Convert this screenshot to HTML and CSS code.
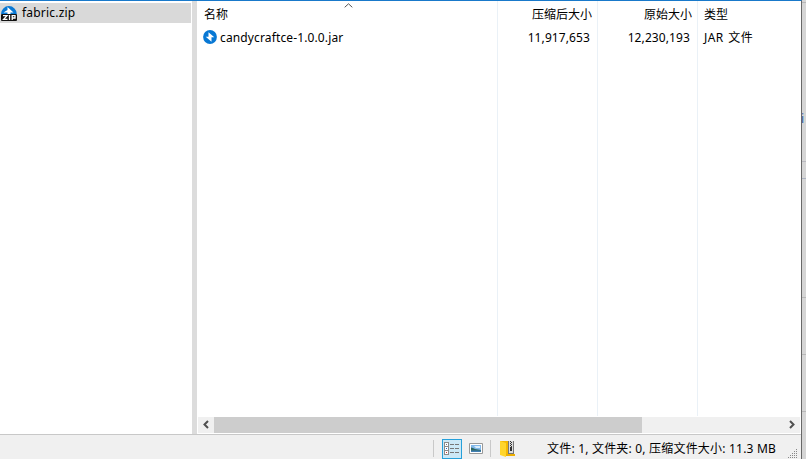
FILE: index.html
```
<!DOCTYPE html>
<html lang="zh-CN">
<head>
<meta charset="utf-8">
<title>fabric.zip</title>
<link rel="stylesheet" href="styles.css">
</head>
<body>
<div class="desktop">
  <div class="window">
    <div class="main">
      <aside class="tree">
        <div class="tree-item">
          <svg class="zip-icon" width="17" height="18" viewBox="0 0 17 18">
            <path d="M1 10a7.900 7.900 0 0 1 15.800 0z" fill="#0878d4"/>
            <path d="M7.500 3L13.500 8.500H10.500V10H7.500V8.500H3.500L7.500 6z" fill="#fff"/>
            <rect x="1" y="10" width="16" height="7" rx="1" fill="#111"/>
            <path d="M3 11.700h4L3.600 15.300H7.500M9.500 11v5M12.200 16v-4.300h2.800v2.300h-2.800" fill="none" stroke="#fff" stroke-width="1.300"/>
          </svg>
          <span class="tree-name">fabric.zip</span>
        </div>
      </aside>
      <div class="splitter"></div>
      <section class="list">
        <div class="columns">
          <div class="col name">
            <svg class="sort" width="9" height="5" viewBox="0 0 9 5"><path d="M.7 4.3L4.5.8l3.8 3.5" fill="none" stroke="#555"/></svg>
            <div class="head">名称</div>
            <div class="cell file">
              <svg class="file-icon" width="14" height="14" viewBox="0 0 14 14">
                <circle cx="7" cy="7" r="6.9" fill="#0878d4"/>
                <path d="M5.500 2.300L11.300 7.300H8.500V11.700L2.700 6.700H5.500z" fill="#fff"/>
              </svg>
              <span class="file-name">candycraftce-1.0.0.jar</span>
            </div>
          </div>
          <div class="col num"><div class="head">压缩后大小</div><div class="cell"><span class="number">11,917,653</span></div></div>
          <div class="col num"><div class="head">原始大小</div><div class="cell"><span class="number">12,230,193</span></div></div>
          <div class="col type"><div class="head">类型</div><div class="cell kind">JAR 文件</div></div>
        </div>
        <div class="scrollbar">
          <svg width="16" height="16" viewBox="0 0 16 16"><path d="M10 4L6.500 7.500 10 11" fill="none" stroke="#505050" stroke-width="2"/></svg>
          <div class="track"><div class="thumb"></div></div>
          <svg width="16" height="16" viewBox="0 0 16 16"><path d="M6 4l3.500 3.500L6 11" fill="none" stroke="#505050" stroke-width="2"/></svg>
        </div>
      </section>
    </div>
    <footer class="status">
      <div class="sep"></div>
      <div class="view active">
        <svg width="18" height="18" viewBox="0 0 18 18" shape-rendering="crispEdges">
          <g fill="#fff" stroke="#8a8a8a"><path d="M1.500 2.500h4v4h-4zM1.500 6.500h4v4h-4zM1.500 10.500h4v4h-4z"/></g>
          <path d="M3 4h1v1H3z" fill="#678"/><path d="M3 8h1v1H3z" fill="#26c"/><path d="M3 12h1v1H3z" fill="#c33"/>
          <path d="M7 4h4v1H7zM12 4h4v1h-4zM7 8h4v1H7zM12 8h4v1h-4zM7 12h4v1H7zM12 12h4v1h-4z" fill="#777"/>
        </svg>
      </div>
      <svg class="thumbs" width="14" height="11" viewBox="0 0 14 11">
        <path d="M.5.5h13v10H.5z" fill="#fff" stroke="#999"/>
        <path d="M2 2h10v7H2z" fill="#82b8ea"/><path d="M2 4.500q2 0 4 1.500l6 1v1H2z" fill="#2c6660"/><path d="M2 7.500h10V9H2z" fill="#4380b4"/><path d="M5 3h6v2H7z" fill="#d8edfb"/>
      </svg>
      <div class="sep"></div>
      <svg class="folder" width="17" height="17" viewBox="0 0 17 17">
        <path d="M1 1h14v14H1z" fill="#f5b800"/>
        <path d="M9 1h6v13H9z" fill="#777"/><path d="M10 1h4v12h-4z" fill="#ddd"/>
        <path d="M11 1h1v1h-1zM12 2h1v1h-1zM11 3h1v1h-1zM12 4h1v1h-1zM11 5h1v1h-1zM12 6h1v1h-1zM11 7h2v4h-2z" fill="#333"/>
        <path d="M1 1l6 2v14l-6-2z" fill="#ffd52b"/><path d="M7 14h9v2H7z" fill="#edae00"/>
      </svg>
      <span class="summary">文件: 1, 文件夹: 0, 压缩文件大小: 11.3 MB</span>
      <svg class="grip" width="10" height="10" viewBox="0 0 10 10" shape-rendering="crispEdges"><path d="M8 0h1v1H8zM6 2h1v1H6zM8 2h1v1H8zM4 4h1v1H4zM6 4h1v1H6zM8 4h1v1H8zM2 6h1v1H2zM4 6h1v1H4zM6 6h1v1H6zM8 6h1v1H8zM0 8h1v1H0zM2 8h1v1H2zM4 8h1v1H4zM6 8h1v1H6zM8 8h1v1H8z" fill="#888"/></svg>
    </footer>
  </div>
  <div class="behind">
    <div class="block b1"></div>
    <div class="block b2"><span>i</span></div>
    <div class="block b3"></div>
    <div class="block b4"></div>
    <div class="block b5"></div>
    <div class="block b6"></div>
  </div>
</div>
</body>
</html>
```
FILE: styles.css
```
* { box-sizing: border-box; }
body { margin: 0; overflow: hidden; font: 12px/16px "Noto Sans", "Noto Sans CJK SC", sans-serif; color: #000; }
svg { display: block; flex: none; }
.desktop { display: flex; width: 806px; height: 459px; }
.window { width: 802px; display: flex; flex-direction: column; border-top: 1px solid #1979ca; border-right: 1px solid #686868; background: #fff; }
.main { height: 433px; display: flex; }
.tree { width: 192px; padding-top: 2px; }
.tree-item { width: 191px; height: 20px; display: flex; align-items: center; background: #d9d9d9; }
.tree-name { margin-left: 5px; letter-spacing: .2px; white-space: nowrap; }
.splitter { width: 5px; background: #dcdcdc; }
.list { width: 604px; display: flex; flex-direction: column; padding-left: 1px; }
.columns { height: 416px; display: flex; }
.col { position: relative; width: 100px; height: 415px; padding-top: 6px; border-right: 1px solid #eaf1f7; white-space: nowrap; }
.name { width: 300px; padding-left: 6px; }
.num { text-align: right; padding-right: 5px; }
.num .cell { padding-right: 2px; letter-spacing: .1px; }
.type { padding-left: 6px; border: 0; }
.head { height: 16px; }
.cell { height: 16px; margin-top: 7px; }
.kind { letter-spacing: .45px; word-spacing: 1px; }
.file { display: flex; align-items: center; margin-left: -1px; }
.file-icon { margin-bottom: 2px; }
.file-name { margin-left: 3px; letter-spacing: .13px; }
.sort { position: absolute; left: 146px; top: 2px; }
.scrollbar { width: 602px; height: 16px; display: flex; background: #f0f0f0; }
.track { flex: 1; }
.thumb { width: 428px; height: 16px; background: #cdcdcd; }
.status { height: 25px; display: flex; align-items: center; padding-left: 433px; border-top: 1px solid #c8c8c8; background: #f0f0f0; padding-top: 3px; }
.sep { width: 1px; height: 17px; background: #c9c9c9; }
.view { width: 20px; height: 20px; margin-left: 8px; border: 1px solid #26a0da; background: #cce8f6; }
.thumbs { margin: 0 7px; }
.folder { margin-left: 8px; }
.summary { width: 230px; margin-left: 31px; letter-spacing: .2px; white-space: nowrap; }
.grip { margin-left: 11px; align-self: flex-end; }
.behind { width: 4px; background: #d5d5d5; overflow: hidden; }
.block { border-bottom: 1px solid #b8b8b8; }
.b1 { height: 3px; }
.b2 { height: 159px; padding-top: 108px; color: #285aa5; border-color: #b9b9bf; }
.b2 span { margin-left: -1px; }
.b3 { height: 17px; border-color: #abb2c0; }
.b4 { height: 119px; }
.b5, .b6 { height: 57px; }
```
